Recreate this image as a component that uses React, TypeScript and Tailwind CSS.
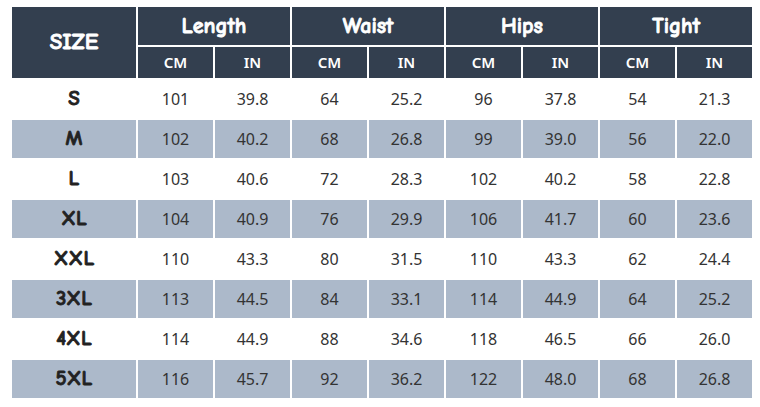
const groups = ["Length", "Waist", "Hips", "Tight"];

const rows: [string, ...string[]][] = [
  ["S", "101", "39.8", "64", "25.2", "96", "37.8", "54", "21.3"],
  ["M", "102", "40.2", "68", "26.8", "99", "39.0", "56", "22.0"],
  ["L", "103", "40.6", "72", "28.3", "102", "40.2", "58", "22.8"],
  ["XL", "104", "40.9", "76", "29.9", "106", "41.7", "60", "23.6"],
  ["XXL", "110", "43.3", "80", "31.5", "110", "43.3", "62", "24.4"],
  ["3XL", "113", "44.5", "84", "33.1", "114", "44.9", "64", "25.2"],
  ["4XL", "114", "44.9", "88", "34.6", "118", "46.5", "66", "26.0"],
  ["5XL", "116", "45.7", "92", "36.2", "122", "48.0", "68", "26.8"],
];

// comic-style heading font, thickened a bit with a stroke
const comic =
  "font-['Comic_Sans_MS','Comic_Neue','Open_Sans',sans-serif] font-bold [-webkit-text-stroke:0.8px_currentColor]";

export default function App() {
  return (
    <div className="w-[760px] h-[407px] bg-white pl-[10px] pt-[5px] font-['Noto_Sans','Open_Sans',sans-serif]">
      <table className="border-collapse table-fixed w-[742px]">
        <colgroup>
          <col className="w-[126px]" />
          {Array.from({ length: 8 }).map((_, i) => (
            <col key={i} className="w-[77px]" />
          ))}
        </colgroup>
        <thead className="bg-[#333f4f] text-white">
          <tr className="h-[40px]">
            <th rowSpan={2} className={`border-2 border-white text-[23px] ${comic}`}>
              SIZE
            </th>
            {groups.map((g) => (
              <th key={g} colSpan={2} className={`border-2 border-white text-[22px] ${comic}`}>
                {g}
              </th>
            ))}
          </tr>
          <tr className="h-[33px]">
            {groups.flatMap((g) => [
              <th key={g + "cm"} className="border-2 border-white text-[15px] font-semibold">
                CM
              </th>,
              <th key={g + "in"} className="border-2 border-white text-[15px] font-semibold">
                IN
              </th>,
            ])}
          </tr>
        </thead>
        <tbody>
          {rows.map((r, i) => (
            <tr key={r[0]} className={`h-[40px] ${i % 2 === 1 ? "bg-[#acb9ca]" : "bg-white"}`}>
              <td className={`border-2 border-white text-center text-[21px] text-[#222] ${comic}`}>
                {r[0]}
              </td>
              {r.slice(1).map((v, j) => (
                <td key={j} className="border-2 border-white text-center text-[16px] text-[#333]">
                  {v}
                </td>
              ))}
            </tr>
          ))}
        </tbody>
      </table>
    </div>
  );
}
